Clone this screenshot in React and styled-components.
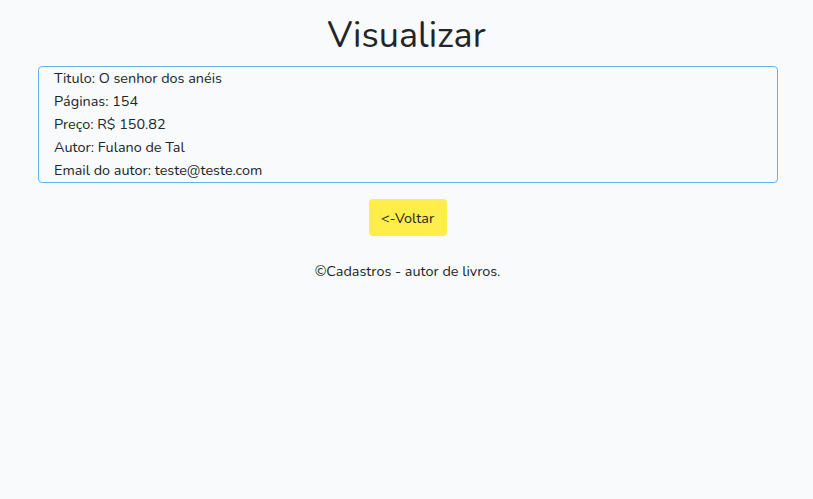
import React from 'react'
import styled, { createGlobalStyle } from 'styled-components'

const GlobalStyle = createGlobalStyle`
  html, body {
    margin: 0;
    padding: 0;
    background: #f8fafc;
  }
  body {
    font-family: 'Nunito', 'Noto Sans', 'Open Sans', sans-serif;
    color: #212529;
  }
`

const Page = styled.main`
  display: flex;
  flex-direction: column;
  align-items: center;
  min-height: 499px;
`

const Title = styled.h1`
  margin: 12px 0 6px;
  font-size: 36px;
  font-weight: 400;
  line-height: 48px;
  color: #212529;
`

const DetailBox = styled.ul`
  list-style: none;
  box-sizing: border-box;
  width: 740px;
  margin: 0 0 0 3px;
  padding: 0 15px;
  border: 1px solid #63b3ed;
  border-radius: 4px;
`

const Item = styled.li`
  font-size: 14.4px;
  line-height: 23px;
`

const BackButton = styled.button`
  margin: 16px 0 0 2px;
  width: 78px;
  height: 37px;
  border: none;
  border-radius: 4px;
  background: #ffed4a;
  color: #212529;
  font-family: inherit;
  font-size: 14.4px;
  cursor: pointer;
`

const Footer = styled.p`
  margin: 25px 0 0 2px;
  font-size: 14.4px;
  line-height: 20px;
`

const livro = {
  titulo: 'O senhor dos anéis',
  paginas: 154,
  preco: '150.82',
  autor: 'Fulano de Tal',
  email: 'teste@teste.com',
}

export default function App() {
  return (
    <>
      <GlobalStyle />
      <Page>
        <Title>Visualizar</Title>
        <DetailBox>
          <Item>Titulo: {livro.titulo}</Item>
          <Item>Páginas: {livro.paginas}</Item>
          <Item>Preço: R$ {livro.preco}</Item>
          <Item>Autor: {livro.autor}</Item>
          <Item>Email do autor: {livro.email}</Item>
        </DetailBox>
        <BackButton>&lt;-Voltar</BackButton>
        <Footer>©Cadastros - autor de livros.</Footer>
      </Page>
    </>
  )
}
